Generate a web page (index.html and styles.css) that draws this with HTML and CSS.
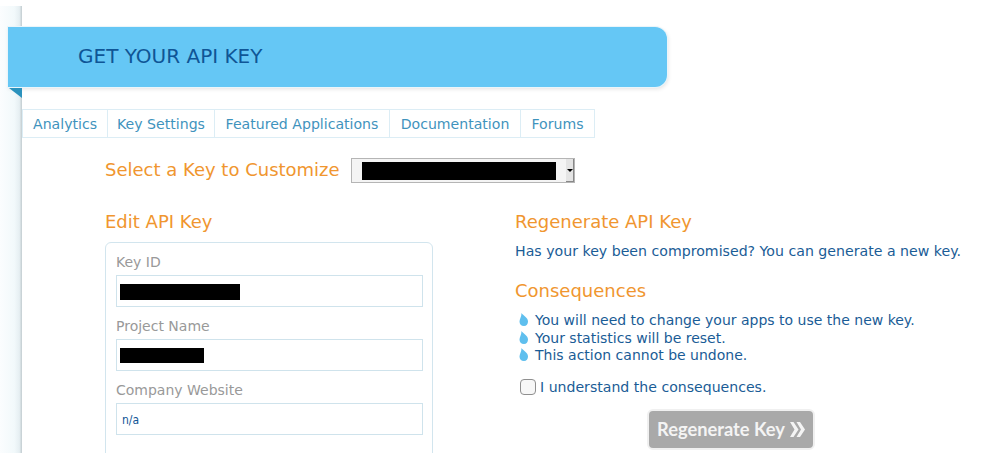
FILE: index.html
```html
<!DOCTYPE html>
<html lang="en">
<head>
  <meta charset="UTF-8">
  <title>Get Your API Key</title>
  <link rel="stylesheet" href="styles.css">
</head>
<body>
  <div class="page">
    <div class="gutter"></div>
    <div class="main">
      <div class="banner">
        <h1>GET YOUR API KEY</h1>
      </div>
      <div class="fold"></div>

      <ul class="tabs">
        <li>Analytics</li>
        <li>Key Settings</li>
        <li>Featured Applications</li>
        <li>Documentation</li>
        <li>Forums</li>
      </ul>

      <div class="key-select">
        <h2>Select a Key to Customize</h2>
        <div class="select">
          <span class="redact"></span>
          <span class="select-arrow"></span>
        </div>
      </div>

      <div class="columns">
        <section class="edit">
          <h2>Edit API Key</h2>
          <div class="edit-box">
            <label>Key ID</label>
            <div class="field"><span class="redact redact-id"></span></div>
            <label>Project Name</label>
            <div class="field"><span class="redact redact-name"></span></div>
            <label>Company Website</label>
            <div class="field field-text">n/a</div>
          </div>
        </section>

        <section class="regen">
          <h3>Regenerate API Key</h3>
          <p class="intro">Has your key been compromised? You can generate a new key.</p>
          <h3 class="consequences">Consequences</h3>
          <ul class="drops">
            <li><svg viewBox="0 0 9 13"><path d="M2.500 0C4 2.500 9 4.500 9 8.500C9 11 7.500 13 5 13C2 13 0.500 11 0.500 8.500C0.500 6 2.500 4 2.500 0Z"/></svg>You will need to change your apps to use the new key.</li>
            <li><svg viewBox="0 0 9 13"><path d="M2.500 0C4 2.500 9 4.500 9 8.500C9 11 7.500 13 5 13C2 13 0.500 11 0.500 8.500C0.500 6 2.500 4 2.500 0Z"/></svg>Your statistics will be reset.</li>
            <li><svg viewBox="0 0 9 13"><path d="M2.500 0C4 2.500 9 4.500 9 8.500C9 11 7.500 13 5 13C2 13 0.500 11 0.500 8.500C0.500 6 2.500 4 2.500 0Z"/></svg>This action cannot be undone.</li>
          </ul>
          <label class="agree"><span class="checkbox"></span>I understand the consequences.</label>
          <div class="actions">
            <button type="button">Regenerate Key<svg class="chevrons" viewBox="0 0 15 15"><path d="M0 0H3.500L8.500 7.500L3.500 15H0L4.500 7.500Z"/><path d="M6.500 0H10L15 7.500L10 15H6.500L11 7.500Z"/></svg></button>
          </div>
        </section>
      </div>
    </div>
  </div>
</body>
</html>
```

FILE: styles.css
```css
body {
  margin: 0;
  background: #fff;
  font-family: 'DejaVu Sans', sans-serif;
  color: #1a5c96;
}

.page {
  display: flex;
  height: 447px;
  margin-top: 6px;
  overflow: hidden;
}

.gutter {
  width: 22px;
  flex-shrink: 0;
  background: linear-gradient(90deg, #fbfdfe 0%, #f2f9fb 65%, #e6eff2 88%, #c2ccd0 100%);
}

.main {
  position: relative;
  flex: 1;
  padding-top: 21px;
  min-width: 0;
}

.banner {
  width: 659px;
  height: 60px;
  margin-left: -14px;
  position: relative;
  background: #65c7f5;
  border-radius: 0 12px 12px 0;
  box-shadow: 0 0 0 1px #eaf5fa, 1px 2px 4px rgba(0, 0, 0, 0.12);
}

.banner h1 {
  margin: 0;
  padding-left: 70px;
  font-size: 20px;
  font-weight: normal;
  line-height: 58px;
  color: #0f5596;
}

.fold {
  position: absolute;
  left: -13px;
  top: 82px;
  border-top: 10px solid #2b92bd;
  border-left: 13px solid transparent;
}

.tabs {
  display: grid;
  grid-template-columns: 84px 107px 175px 131px 74px;
  width: fit-content;
  list-style: none;
  margin: 22px 0 0;
  padding: 0;
  border: 1px solid #dcedf5;
}

.tabs li {
  padding-top: 1px;
  font-size: 14.100px;
  line-height: 26px;
  text-align: center;
  color: #3f93bd;
  border-left: 1px solid #dcedf5;
}

.tabs li:first-child {
  border-left: none;
}

.key-select {
  display: flex;
  align-items: flex-start;
  margin: 20px 0 0 83px;
}

h2, h3 {
  margin: 0;
  font-weight: normal;
  color: #f0962f;
}

.key-select h2 {
  font-size: 18px;
  line-height: 23px;
}

.select {
  display: flex;
  align-items: center;
  box-sizing: border-box;
  width: 224px;
  height: 25px;
  margin-left: 11px;
  padding-left: 10px;
  border: 1px solid #b5b5b5;
  background: #f4f4f4;
}

.redact {
  display: block;
  background: #000;
}

.select .redact {
  width: 194px;
  height: 18px;
}

.select-arrow {
  position: relative;
  width: 8px;
  height: 100%;
  margin-left: auto;
  background: #e4e4e4;
  border-right: 1px solid #888;
  border-bottom: 1px solid #888;
  box-sizing: border-box;
}

.select-arrow::after {
  content: "";
  position: absolute;
  left: 1px;
  top: 10px;
  border-top: 3px solid #000;
  border-left: 3px solid transparent;
  border-right: 3px solid transparent;
}

.columns {
  display: flex;
  margin: 28px 0 0 83px;
}

.edit {
  width: 328px;
  flex-shrink: 0;
}

.edit h2 {
  font-size: 18px;
  line-height: 22px;
}

.edit-box {
  box-sizing: border-box;
  height: 240px;
  margin-top: 9px;
  padding: 8px 9px 0 10px;
  border: 1px solid #d2e5ee;
  border-radius: 6px;
}

.edit-box label {
  display: block;
  font-size: 14px;
  line-height: 22px;
  color: #999;
}

.field {
  box-sizing: border-box;
  display: flex;
  align-items: center;
  height: 32px;
  margin: 2px 0 8px;
  padding: 1px 0 0 3px;
  border: 1px solid #cfe3ec;
  font-size: 12px;
  font-family: 'DejaVu Sans Condensed', 'DejaVu Sans', sans-serif;
  color: #0f5596;
}

.field-text {
  padding-left: 5px;
}

.redact-id {
  width: 120px;
  height: 16px;
}

.redact-name {
  width: 84px;
  height: 15px;
}

.regen {
  margin-left: 82px;
}

.regen h3 {
  font-size: 18px;
  line-height: 22px;
}

.intro {
  margin: 8px 0 0;
  font-size: 14.150px;
  line-height: 20px;
}

.regen .consequences {
  margin-top: 19px;
}

.drops {
  list-style: none;
  margin: 10px 0 0;
  padding: 0;
  font-size: 14px;
  line-height: 17.500px;
}

.drops li {
  display: flex;
  align-items: center;
}

.drops svg {
  width: 9px;
  height: 13px;
  margin: 0 7px 2px 4px;
  flex-shrink: 0;
  fill: #5fbfee;
}

.agree {
  display: flex;
  align-items: center;
  margin-top: 12px;
  font-size: 14.100px;
  line-height: 20px;
}

.checkbox {
  box-sizing: border-box;
  width: 16px;
  height: 16px;
  margin: 0 4px 0 5px;
  background: #f7f7f7;
  border: 1px solid #8f8f8f;
  border-radius: 4px;
}

.actions {
  margin: 12px 0 0 132px;
}

button {
  display: flex;
  align-items: center;
  box-sizing: border-box;
  width: 168px;
  height: 41px;
  padding: 0 0 0 8px;
  background: #a9a9a9;
  border: 2px solid #f0f0f0;
  border-radius: 6px;
  font-family: Lato, sans-serif;
  font-size: 18.300px;
  font-weight: bold;
  color: #f4f4f4;
}

.chevrons {
  width: 15px;
  height: 15px;
  margin-left: 5px;
  fill: #f4f4f4;
}
```
